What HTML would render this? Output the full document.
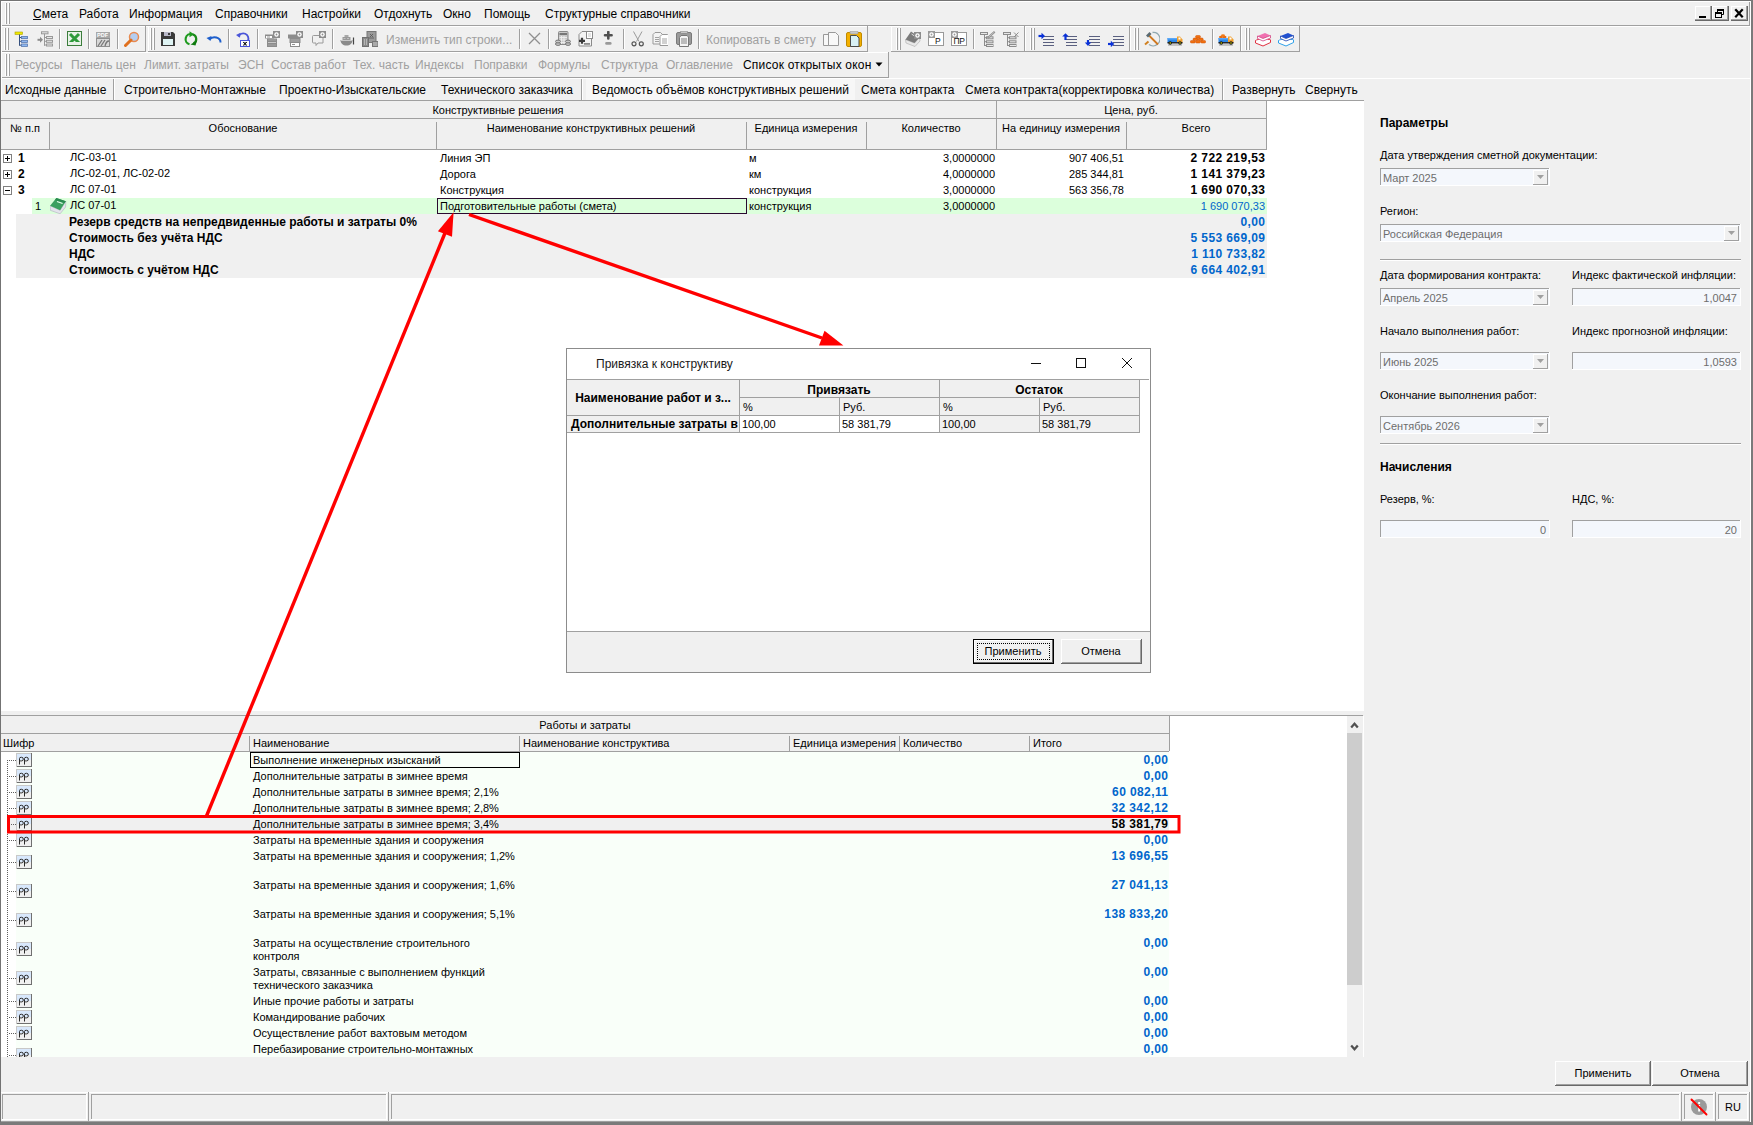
<!DOCTYPE html><html><head><meta charset="utf-8"><style>
html,body{margin:0;padding:0;}
body{width:1753px;height:1125px;position:relative;overflow:hidden;background:#f0f0f0;font-family:"Liberation Sans",sans-serif;color:#000;}
.t{position:absolute;white-space:pre;}
.r{position:absolute;}
</style></head><body>
<div class="r" style="left:5px;top:3px;width:1px;height:21px;background:#fff;"></div>
<div class="r" style="left:6px;top:3px;width:1px;height:21px;background:#a0a0a0;"></div>
<div class="r" style="left:8px;top:3px;width:1px;height:21px;background:#fff;"></div>
<div class="r" style="left:9px;top:3px;width:1px;height:21px;background:#a0a0a0;"></div>
<div class="t " style="left:33px;top:7px;font-size:12px;line-height:14px;">Смета</div>
<div class="t " style="left:79px;top:7px;font-size:12px;line-height:14px;">Работа</div>
<div class="t " style="left:129px;top:7px;font-size:12px;line-height:14px;">Информация</div>
<div class="t " style="left:215px;top:7px;font-size:12px;line-height:14px;">Справочники</div>
<div class="t " style="left:302px;top:7px;font-size:12px;line-height:14px;">Настройки</div>
<div class="t " style="left:374px;top:7px;font-size:12px;line-height:14px;">Отдохнуть</div>
<div class="t " style="left:443px;top:7px;font-size:12px;line-height:14px;">Окно</div>
<div class="t " style="left:484px;top:7px;font-size:12px;line-height:14px;">Помощь</div>
<div class="t " style="left:545px;top:7px;font-size:12px;line-height:14px;">Структурные справочники</div>
<div class="r" style="left:33px;top:19px;width:8px;height:1px;background:#000;"></div>
<div class="r" style="left:1px;top:25px;width:1749px;height:1px;background:#a0a0a0;"></div>
<div class="r" style="left:1px;top:26px;width:1749px;height:1px;background:#fff;"></div>
<div class="r" style="left:1695px;top:6px;width:17px;height:15px;background:#f0f0f0;box-shadow: inset -1px -1px 0 #696969, inset -2px -2px 0 #a0a0a0, inset 1px 1px 0 #fff;"></div>
<div class="r" style="left:1712px;top:6px;width:17px;height:15px;background:#f0f0f0;box-shadow: inset -1px -1px 0 #696969, inset -2px -2px 0 #a0a0a0, inset 1px 1px 0 #fff;"></div>
<div class="r" style="left:1731px;top:6px;width:17px;height:15px;background:#f0f0f0;box-shadow: inset -1px -1px 0 #696969, inset -2px -2px 0 #a0a0a0, inset 1px 1px 0 #fff;"></div>
<svg class="r" style="left:1695px;top:6px;" width="17" height="15" viewBox="0 0 17 15"><rect x="4" y="10" width="7" height="2" fill="#000"/></svg>
<svg class="r" style="left:1712px;top:6px;" width="17" height="15" viewBox="0 0 17 15"><path d="M5.5 6V3.5h6v5h-1.5" stroke="#000" fill="none" stroke-width="1"/><rect x="5" y="3" width="7" height="2" fill="#000"/><rect x="3.5" y="6.5" width="6" height="5" fill="none" stroke="#000" stroke-width="1"/><rect x="3" y="6" width="7" height="2" fill="#000"/></svg>
<svg class="r" style="left:1731px;top:6px;" width="17" height="15" viewBox="0 0 17 15"><path d="M5 4l6 6.5M11 4l-6 6.5" stroke="#000" stroke-width="2.2" stroke-linecap="square"/></svg>
<div class="r" style="left:1749px;top:1px;width:1px;height:25px;background:#a0a0a0;"></div>
<div class="r" style="left:1px;top:26px;width:1px;height:25px;background:#fff;"></div>
<div class="r" style="left:145px;top:26px;width:1px;height:26px;background:#a0a0a0;"></div>
<div class="r" style="left:1px;top:51px;width:145px;height:1px;background:#a0a0a0;"></div>
<div class="r" style="left:148px;top:26px;width:1px;height:25px;background:#fff;"></div>
<div class="r" style="left:867px;top:26px;width:1px;height:26px;background:#a0a0a0;"></div>
<div class="r" style="left:148px;top:51px;width:720px;height:1px;background:#a0a0a0;"></div>
<div class="r" style="left:891px;top:26px;width:1px;height:25px;background:#fff;"></div>
<div class="r" style="left:1024px;top:26px;width:1px;height:26px;background:#a0a0a0;"></div>
<div class="r" style="left:891px;top:51px;width:134px;height:1px;background:#a0a0a0;"></div>
<div class="r" style="left:1025px;top:26px;width:1px;height:25px;background:#fff;"></div>
<div class="r" style="left:1129px;top:26px;width:1px;height:26px;background:#a0a0a0;"></div>
<div class="r" style="left:1025px;top:51px;width:105px;height:1px;background:#a0a0a0;"></div>
<div class="r" style="left:1130px;top:26px;width:1px;height:25px;background:#fff;"></div>
<div class="r" style="left:1240px;top:26px;width:1px;height:26px;background:#a0a0a0;"></div>
<div class="r" style="left:1130px;top:51px;width:111px;height:1px;background:#a0a0a0;"></div>
<div class="r" style="left:1241px;top:26px;width:1px;height:25px;background:#fff;"></div>
<div class="r" style="left:1299px;top:26px;width:1px;height:26px;background:#a0a0a0;"></div>
<div class="r" style="left:1241px;top:51px;width:59px;height:1px;background:#a0a0a0;"></div>
<div class="r" style="left:4px;top:28px;width:1px;height:22px;background:#fff;"></div>
<div class="r" style="left:5px;top:28px;width:1px;height:22px;background:#a0a0a0;"></div>
<div class="r" style="left:7px;top:28px;width:1px;height:22px;background:#fff;"></div>
<div class="r" style="left:8px;top:28px;width:1px;height:22px;background:#a0a0a0;"></div>
<div class="r" style="left:150px;top:28px;width:1px;height:22px;background:#fff;"></div>
<div class="r" style="left:151px;top:28px;width:1px;height:22px;background:#a0a0a0;"></div>
<div class="r" style="left:153px;top:28px;width:1px;height:22px;background:#fff;"></div>
<div class="r" style="left:154px;top:28px;width:1px;height:22px;background:#a0a0a0;"></div>
<div class="r" style="left:896px;top:28px;width:1px;height:22px;background:#fff;"></div>
<div class="r" style="left:897px;top:28px;width:1px;height:22px;background:#a0a0a0;"></div>
<div class="r" style="left:899px;top:28px;width:1px;height:22px;background:#fff;"></div>
<div class="r" style="left:900px;top:28px;width:1px;height:22px;background:#a0a0a0;"></div>
<div class="r" style="left:1030px;top:28px;width:1px;height:22px;background:#fff;"></div>
<div class="r" style="left:1031px;top:28px;width:1px;height:22px;background:#a0a0a0;"></div>
<div class="r" style="left:1033px;top:28px;width:1px;height:22px;background:#fff;"></div>
<div class="r" style="left:1034px;top:28px;width:1px;height:22px;background:#a0a0a0;"></div>
<div class="r" style="left:1134px;top:28px;width:1px;height:22px;background:#fff;"></div>
<div class="r" style="left:1135px;top:28px;width:1px;height:22px;background:#a0a0a0;"></div>
<div class="r" style="left:1137px;top:28px;width:1px;height:22px;background:#fff;"></div>
<div class="r" style="left:1138px;top:28px;width:1px;height:22px;background:#a0a0a0;"></div>
<div class="r" style="left:1245px;top:28px;width:1px;height:22px;background:#fff;"></div>
<div class="r" style="left:1246px;top:28px;width:1px;height:22px;background:#a0a0a0;"></div>
<div class="r" style="left:1248px;top:28px;width:1px;height:22px;background:#fff;"></div>
<div class="r" style="left:1249px;top:28px;width:1px;height:22px;background:#a0a0a0;"></div>
<div class="r" style="left:59px;top:29px;width:1px;height:20px;background:#a0a0a0;"></div>
<div class="r" style="left:60px;top:29px;width:1px;height:20px;background:#fff;"></div>
<div class="r" style="left:88px;top:29px;width:1px;height:20px;background:#a0a0a0;"></div>
<div class="r" style="left:89px;top:29px;width:1px;height:20px;background:#fff;"></div>
<div class="r" style="left:117px;top:29px;width:1px;height:20px;background:#a0a0a0;"></div>
<div class="r" style="left:118px;top:29px;width:1px;height:20px;background:#fff;"></div>
<div class="r" style="left:228px;top:29px;width:1px;height:20px;background:#a0a0a0;"></div>
<div class="r" style="left:229px;top:29px;width:1px;height:20px;background:#fff;"></div>
<div class="r" style="left:257px;top:29px;width:1px;height:20px;background:#a0a0a0;"></div>
<div class="r" style="left:258px;top:29px;width:1px;height:20px;background:#fff;"></div>
<div class="r" style="left:332px;top:29px;width:1px;height:20px;background:#a0a0a0;"></div>
<div class="r" style="left:333px;top:29px;width:1px;height:20px;background:#fff;"></div>
<div class="r" style="left:519px;top:29px;width:1px;height:20px;background:#a0a0a0;"></div>
<div class="r" style="left:520px;top:29px;width:1px;height:20px;background:#fff;"></div>
<div class="r" style="left:548px;top:29px;width:1px;height:20px;background:#a0a0a0;"></div>
<div class="r" style="left:549px;top:29px;width:1px;height:20px;background:#fff;"></div>
<div class="r" style="left:623px;top:29px;width:1px;height:20px;background:#a0a0a0;"></div>
<div class="r" style="left:624px;top:29px;width:1px;height:20px;background:#fff;"></div>
<div class="r" style="left:698px;top:29px;width:1px;height:20px;background:#a0a0a0;"></div>
<div class="r" style="left:699px;top:29px;width:1px;height:20px;background:#fff;"></div>
<div class="r" style="left:973px;top:29px;width:1px;height:20px;background:#a0a0a0;"></div>
<div class="r" style="left:974px;top:29px;width:1px;height:20px;background:#fff;"></div>
<div class="r" style="left:1212px;top:29px;width:1px;height:20px;background:#a0a0a0;"></div>
<div class="r" style="left:1213px;top:29px;width:1px;height:20px;background:#fff;"></div>
<svg class="r" style="left:14px;top:31px;" width="16" height="16" viewBox="0 0 16 16"><rect x="1" y="1" width="7.5" height="2.5" fill="#f0e800" stroke="#a8a000" stroke-width="0.6"/><path d="M5.5 3.5v11.2M5.5 6.5h2M5.5 10.3h2M5.5 14.2h2" stroke="#35507f" stroke-width="1"/><rect x="7.5" y="5.4" width="6" height="2.2" fill="#90b8f0" stroke="#5878b0" stroke-width="0.8"/><rect x="7.5" y="9.3" width="6" height="2.2" fill="#90b8f0" stroke="#5878b0" stroke-width="0.8"/><rect x="7.5" y="13" width="6" height="2.4" fill="#90b8f0" stroke="#5878b0" stroke-width="0.8"/></svg>
<svg class="r" style="left:37px;top:31px;" width="16" height="16" viewBox="0 0 16 16"><path d="M0.5 8.8h3" stroke="#8c8c8c" stroke-width="2"/><polygon points="3,5.8 6,8.8 3,11.8" fill="#8c8c8c"/><rect x="4.5" y="0.8" width="6.5" height="2" fill="#e8e8e8" stroke="#999" stroke-width="1"/><path d="M7.5 2.8v12M7.5 6.5h2M7.5 10.3h2M7.5 14h2" stroke="#999" stroke-width="1"/><rect x="9.5" y="5.5" width="6" height="2" fill="#e8e8e8" stroke="#999" stroke-width="1"/><rect x="9.5" y="9.3" width="6" height="2" fill="#e8e8e8" stroke="#999" stroke-width="1"/><rect x="9.5" y="13" width="6" height="2" fill="#e8e8e8" stroke="#999" stroke-width="1"/></svg>
<svg class="r" style="left:67px;top:31px;" width="16" height="16" viewBox="0 0 16 16"><rect x="0.5" y="0.5" width="14" height="14" fill="#e8f2e8" stroke="#3b7d3b" stroke-width="1"/><path d="M3 3l9 9M12 3l-9 9" stroke="#2e9a3a" stroke-width="3"/><rect x="2" y="11" width="11" height="2" fill="#e8f2e8"/></svg>
<svg class="r" style="left:95px;top:31px;" width="16" height="16" viewBox="0 0 16 16"><path d="M1 1h11l3 3v12H1z" fill="#8f8f8f"/><rect x="1" y="1" width="14" height="6" fill="#a8a8a8"/><text x="2" y="6.3" font-size="5.5" font-weight="bold" fill="#fff" font-family="Liberation Sans">PDF</text><rect x="2" y="8" width="12" height="7" fill="#d8d8d8"/><path d="M3 15l4-6M6 15l4-6M10 15c1-4 3-5 4-5" stroke="#777" stroke-width="1.3" fill="none"/></svg>
<svg class="r" style="left:124px;top:31px;" width="16" height="16" viewBox="0 0 16 16"><circle cx="10" cy="6" r="4.5" fill="#b4cdf0" stroke="#e88a50" stroke-width="1.5"/><path d="M7 9l-5.5 5.5" stroke="#e0701e" stroke-width="3" stroke-linecap="round"/></svg>
<svg class="r" style="left:160px;top:31px;" width="16" height="16" viewBox="0 0 16 16"><path d="M1 1h12l2 2v12H1z" fill="#3a3a3a"/><rect x="4" y="1" width="7" height="4" fill="#b8b8c8"/><rect x="8" y="2" width="2" height="2" fill="#3a3a3a"/><rect x="3" y="8" width="10" height="6" fill="#dff4f4"/></svg>
<svg class="r" style="left:183px;top:31px;" width="16" height="16" viewBox="0 0 16 16"><path d="M9 3.2A5 5 0 0 0 6.5 13.2" stroke="#1e9a1e" stroke-width="2.2" fill="none"/><polygon points="6.5,0.3 11,3.2 6.5,6.2" fill="#1e9a1e"/><path d="M9.5 3.2A5 5 0 0 1 10.5 12.5" stroke="#1a8a1a" stroke-width="2.2" fill="none"/><polygon points="14,9.5 12.5,14.5 7.5,13.5" fill="#0f7a0f"/></svg>
<svg class="r" style="left:206px;top:31px;" width="16" height="16" viewBox="0 0 16 16"><path d="M3.5 8.5a6 5 0 0 1 11 3" stroke="#1e5fcc" stroke-width="2" fill="none"/><path d="M0.5 7l5-2-1 5z" fill="#1e5fcc"/></svg>
<svg class="r" style="left:235px;top:31px;" width="16" height="16" viewBox="0 0 16 16"><path d="M3.5 5.5a5 5 0 0 1 9.5 4" stroke="#4a55d8" stroke-width="1.8" fill="none"/><path d="M1 4l4.5-2.2-0.5 5z" fill="#4a55d8"/><rect x="5.5" y="9.5" width="9" height="6" fill="#fff" stroke="#4a55d8"/><path d="M8 11l4 3.5M12 11l-4 3.5M10 11v3.5" stroke="#000" stroke-width="0.9"/></svg>
<svg class="r" style="left:264px;top:31px;" width="16" height="16" viewBox="0 0 16 16"><rect x="1" y="3.5" width="9" height="4" fill="#8c8c8c"/><rect x="2" y="5" width="6" height="2" fill="#fff"/><path d="M3 6h3" stroke="#777" stroke-width="0.8"/><rect x="3" y="7.5" width="10" height="8.5" fill="#8c8c8c"/><path d="M4 11.5h8" stroke="#c8c8c8" stroke-width="1"/><path d="M4 9h8M4 14h8" stroke="#a8a8a8" stroke-width="1"/><rect x="9" y="0" width="7" height="7" fill="#8c8c8c"/><circle cx="12.5" cy="3.5" r="2.2" fill="#fff"/><circle cx="12.5" cy="3.5" r="0.9" fill="#8c8c8c"/></svg>
<svg class="r" style="left:287px;top:31px;" width="16" height="16" viewBox="0 0 16 16"><rect x="1" y="3.5" width="12" height="4" fill="#8c8c8c"/><rect x="3" y="7.5" width="10" height="4" fill="#a0a0a0" stroke="#8c8c8c" stroke-width="1"/><rect x="3.5" y="11.5" width="9" height="4" fill="#fff" stroke="#8c8c8c" stroke-width="1"/><path d="M5 13.5h3" stroke="#777" stroke-width="0.8"/><rect x="9" y="0" width="7" height="7" fill="#8c8c8c"/><circle cx="12.5" cy="3.5" r="2.2" fill="#fff"/><circle cx="12.5" cy="3.5" r="0.9" fill="#8c8c8c"/></svg>
<svg class="r" style="left:310px;top:31px;" width="16" height="16" viewBox="0 0 16 16"><path d="M3.5 4.5h9.5v7.5h-5l-2 2.5v-2.5h-2.5a1 1 0 0 1-1-1v-5.5a1 1 0 0 1 1-1z" fill="none" stroke="#9a9a9a" stroke-width="1"/><rect x="9" y="0" width="7" height="7" fill="#8c8c8c"/><circle cx="12.5" cy="3.5" r="2.2" fill="#fff"/><circle cx="12.5" cy="3.5" r="0.9" fill="#8c8c8c"/></svg>
<svg class="r" style="left:339px;top:31px;" width="16" height="16" viewBox="0 0 16 16"><path d="M1.5 9h12c0 3.5-2.5 5.5-6 5.5S1.5 12.5 1.5 9z" fill="#8a8a8a"/><path d="M2 9.5h11" stroke="#c8c8c8" stroke-width="1"/><rect x="3.5" y="6" width="8" height="3" fill="#999"/><rect x="5.5" y="4" width="4" height="2" fill="#a8a8a8"/><path d="M14.5 6.5v7" stroke="#444" stroke-width="1.2"/><path d="M4.5 7.5h2M8 7.5h2" stroke="#ccc" stroke-width="0.8"/></svg>
<svg class="r" style="left:362px;top:31px;" width="16" height="16" viewBox="0 0 16 16"><rect x="5" y="0.5" width="9" height="11" fill="#9a9a9a" stroke="#777" stroke-width="1"/><rect x="0.5" y="6.5" width="6" height="9" fill="#8a8a8a" stroke="#707070" stroke-width="1"/><rect x="10.5" y="10.5" width="5.5" height="5" fill="#aaa" stroke="#777" stroke-width="1"/><path d="M2.5 8v6M4.5 8v6" stroke="#c0c0c0" stroke-width="0.8"/><path d="M8 3l3 3M11 3l-3 3M7 7h5" stroke="#555" stroke-width="0.8"/></svg>
<svg class="r" style="left:527px;top:31px;" width="16" height="16" viewBox="0 0 16 16"><path d="M2 2l11 11M13 2L2 13" stroke="#8f8f8f" stroke-width="1.3"/></svg>
<svg class="r" style="left:555px;top:31px;" width="16" height="16" viewBox="0 0 16 16"><rect x="3.5" y="0.5" width="9.5" height="13" rx="1" fill="#c8c8c8" stroke="#8a8a8a" stroke-width="1"/><rect x="4.5" y="2" width="7.5" height="2" fill="#777"/><path d="M4.5 6.5h7.5M4.5 9h7.5M4.5 11.5h7.5M6.5 5v8M9 5v8" stroke="#eee" stroke-width="0.9"/><g fill="#c8c8c8" stroke="#777" stroke-width="1"><ellipse cx="3" cy="13" rx="2.6" ry="1.4"/><ellipse cx="3" cy="10.5" rx="2.6" ry="1.4"/><ellipse cx="13" cy="13" rx="2.6" ry="1.4"/><ellipse cx="13" cy="10.5" rx="2.6" ry="1.4"/></g></svg>
<svg class="r" style="left:578px;top:31px;" width="16" height="16" viewBox="0 0 16 16"><path d="M4 0.5h9.5v14.5h-12.5v-11.5z" fill="#f4f4f4" stroke="#8a8a8a" stroke-width="1"/><rect x="8.5" y="0.5" width="6" height="7" fill="#fff" stroke="#8a8a8a" stroke-width="1"/><path d="M10 3h3M10 5h3" stroke="#bbb" stroke-width="0.8"/><path d="M1 9.8h6M4 6.8v6" stroke="#3a3a3a" stroke-width="2.2"/><rect x="6" y="12" width="6" height="1.8" fill="#8a8a8a"/></svg>
<svg class="r" style="left:601px;top:31px;" width="16" height="16" viewBox="0 0 16 16"><path d="M7.3 1v6.5M4 4.2h6.6" stroke="#505050" stroke-width="2.6" stroke-linecap="round"/><rect x="4.2" y="11" width="6.4" height="2.7" rx="1.3" fill="#999"/></svg>
<svg class="r" style="left:630px;top:31px;" width="16" height="16" viewBox="0 0 16 16"><path d="M3.5 0.5L9 10.5M12 0.5L6.5 10.5" stroke="#9a9a9a" stroke-width="1"/><circle cx="4" cy="12.8" r="2" fill="none" stroke="#555" stroke-width="1.2"/><circle cx="11.3" cy="12.8" r="2" fill="none" stroke="#555" stroke-width="1.2"/></svg>
<svg class="r" style="left:652px;top:31px;" width="16" height="16" viewBox="0 0 16 16"><path d="M3 1.5h5.5l2 2v9.5h-9.5v-9.5z" fill="#f4f4f4" stroke="#999" stroke-width="1"/><path d="M10 3.5h5.5l1 1v10h-8.5v-9z" fill="#fff" stroke="#999" stroke-width="1"/><path d="M3 6.5h4M3 8.5h4M3 10.5h4M10 8h5M10 10h5M10 12h5" stroke="#999" stroke-width="0.9"/></svg>
<svg class="r" style="left:676px;top:31px;" width="16" height="16" viewBox="0 0 16 16"><rect x="0.5" y="1.5" width="15" height="12" rx="1.5" fill="#9a9a9a" stroke="#7a7a7a" stroke-width="1"/><rect x="4.5" y="0" width="7" height="2.5" rx="1" fill="#c8c8c8" stroke="#888" stroke-width="0.8"/><path d="M5 4.5h6l1.5 1.5v9.5h-9v-9z" fill="#f4f4f4" stroke="#777" stroke-width="1"/><path d="M5 8h6M5 10h6M5 12h6" stroke="#777" stroke-width="0.9"/></svg>
<svg class="r" style="left:823px;top:31px;" width="16" height="16" viewBox="0 0 16 16"><path d="M0.5 3.5h7v11h-7z" fill="#f8f8f8" stroke="#999" stroke-width="1"/><path d="M5.5 1.5h7l3 3v10h-10z" fill="#f8f8f8" stroke="#999" stroke-width="1"/></svg>
<svg class="r" style="left:846px;top:31px;" width="16" height="16" viewBox="0 0 16 16"><rect x="0.5" y="1.5" width="15" height="14" rx="1.5" fill="#f4b000" stroke="#c08a00" stroke-width="1"/><rect x="4" y="0" width="8" height="3" rx="1" fill="#c8c8c8" stroke="#999" stroke-width="0.6"/><path d="M4.5 4.5h6l2.5 2.5v8.5h-8.5z" fill="#d8f0f4" stroke="#4a4a4a" stroke-width="1"/></svg>
<svg class="r" style="left:905px;top:31px;" width="16" height="16" viewBox="0 0 16 16"><polygon points="0.5,8.5 1,12 10,15.5 15,10 14.5,6.5 9.5,12" fill="#e8e8e8" stroke="#aaa" stroke-width="0.6"/><polygon points="6,0.5 14.5,6.5 9.5,12 0.5,8.5" fill="#7a7a7a"/><path d="M6.5 3l3 2" stroke="#ddd" stroke-width="1"/><rect x="9" y="1" width="7" height="7" fill="#8c8c8c"/><circle cx="12.5" cy="4.5" r="2.2" fill="#fff"/><circle cx="12.5" cy="4.5" r="0.9" fill="#8c8c8c"/></svg>
<svg class="r" style="left:928px;top:31px;" width="16" height="16" viewBox="0 0 16 16"><rect x="0.5" y="1.5" width="15" height="13" fill="#fff" stroke="#999" stroke-width="1"/><rect x="0" y="0" width="7" height="7" fill="#9a9a9a"/><circle cx="3.5" cy="3.5" r="2.2" fill="#fff"/><circle cx="3.5" cy="3.5" r="0.9" fill="#9a9a9a"/><text x="7" y="13" font-size="8.5" font-family="Liberation Sans" fill="#111">P</text></svg>
<svg class="r" style="left:951px;top:31px;" width="16" height="16" viewBox="0 0 16 16"><rect x="0.5" y="1.5" width="15" height="13" fill="#fff" stroke="#999" stroke-width="1"/><rect x="0" y="0" width="7" height="7" fill="#9a9a9a"/><circle cx="3.5" cy="3.5" r="2.2" fill="#fff"/><circle cx="3.5" cy="3.5" r="0.9" fill="#9a9a9a"/><text x="2.5" y="13" font-size="8.5" font-family="Liberation Sans" fill="#111" letter-spacing="-0.3">ПР</text></svg>
<svg class="r" style="left:980px;top:31px;" width="16" height="16" viewBox="0 0 16 16"><rect x="0.5" y="1.5" width="7" height="2" fill="#e8e8e8" stroke="#8c8c8c" stroke-width="1"/><path d="M4.5 3.5v11.5M4.5 6.7h2M4.5 10.7h2M4.5 14.5h2" stroke="#8c8c8c" stroke-width="1"/><rect x="6.5" y="5.8" width="6.5" height="2" fill="#e8e8e8" stroke="#8c8c8c" stroke-width="1"/><rect x="6.5" y="9.8" width="6.5" height="2" fill="#e8e8e8" stroke="#8c8c8c" stroke-width="1"/><rect x="6.5" y="13.5" width="6.5" height="2" fill="#e8e8e8" stroke="#8c8c8c" stroke-width="1"/><path d="M7.7 7l7-6.3" stroke="#8c8c8c" stroke-width="2"/><path d="M8.5 6.2l6-5.3" stroke="#e0e0e0" stroke-width="0.6"/></svg>
<svg class="r" style="left:1003px;top:31px;" width="16" height="16" viewBox="0 0 16 16"><rect x="0.5" y="1.5" width="7" height="2" fill="#e8e8e8" stroke="#8c8c8c" stroke-width="1"/><path d="M4.5 3.5v11.5M4.5 6.7h2M4.5 10.7h2M4.5 14.5h2" stroke="#8c8c8c" stroke-width="1"/><rect x="6.5" y="5.8" width="6.5" height="2" fill="#e8e8e8" stroke="#8c8c8c" stroke-width="1"/><rect x="6.5" y="9.8" width="6.5" height="2" fill="#e8e8e8" stroke="#8c8c8c" stroke-width="1"/><rect x="6.5" y="13.5" width="6.5" height="2" fill="#e8e8e8" stroke="#8c8c8c" stroke-width="1"/><path d="M11 1.5l4.5 4.5M15.5 1.5L11 6" stroke="#8c8c8c" stroke-width="1"/></svg>
<svg class="r" style="left:1038px;top:31px;" width="16" height="16" viewBox="0 0 16 16"><path d="M5 5.5h12M5 8.5h12M5 11.5h12M5 14.5h12" stroke="#5a6080" stroke-width="1.1"/><path d="M0.5 5h3.5" stroke="#0a32d8" stroke-width="2.2"/><polygon points="3.5,1.8 7,5 3.5,8.2" fill="#0a32d8"/></svg>
<svg class="r" style="left:1061px;top:31px;" width="16" height="16" viewBox="0 0 16 16"><path d="M5 5.5h12M5 8.5h12M5 11.5h12M5 14.5h12" stroke="#5a6080" stroke-width="1.1"/><path d="M4.5 9V5" stroke="#0a32d8" stroke-width="2.2"/><polygon points="1.2,5.5 4.5,2.2 7.8,5.5" fill="#0a32d8"/></svg>
<svg class="r" style="left:1084px;top:31px;" width="16" height="16" viewBox="0 0 16 16"><path d="M5 5.5h12M5 8.5h12M5 11.5h12M5 14.5h12" stroke="#5a6080" stroke-width="1.1"/><path d="M4 9v3" stroke="#0a32d8" stroke-width="2.2"/><polygon points="0.8,11.5 4,15 7.2,11.5" fill="#0a32d8"/></svg>
<svg class="r" style="left:1108px;top:31px;" width="16" height="16" viewBox="0 0 16 16"><path d="M5 5.5h12M5 8.5h12M5 11.5h12M5 14.5h12" stroke="#5a6080" stroke-width="1.1"/><path d="M0 13h3" stroke="#0a32d8" stroke-width="2.2"/><polygon points="2.8,9.8 6.3,13 2.8,16.2" fill="#0a32d8"/></svg>
<svg class="r" style="left:1144px;top:31px;" width="16" height="16" viewBox="0 0 16 16"><path d="M8.5 1.5A6.5 6.5 0 0 1 13.5 13 6.5 6.5 0 0 1 5 13.5" stroke="#90a8b0" stroke-width="1.3" fill="none"/><path d="M1 13.5l3.5-3" stroke="#d08020" stroke-width="2"/><path d="M4.5 4l9.5 9.5" stroke="#d07820" stroke-width="1.8"/><path d="M2 4.5l3.5-3.5 2 2-3.5 3.5z" fill="#5a6a72"/></svg>
<svg class="r" style="left:1167px;top:31px;" width="16" height="16" viewBox="0 0 16 16"><rect x="1" y="13.5" width="14" height="1" fill="#9a9a9a"/><rect x="0.5" y="7" width="9.5" height="5" fill="#2b86e8"/><rect x="0.5" y="7" width="9.5" height="1.5" fill="#5aa8f8"/><path d="M10 5.5h3l2.5 3v3.5h-5.5z" fill="#f0a030"/><rect x="11.5" y="6.5" width="2" height="2" fill="#fff"/><rect x="0.5" y="11" width="15" height="1.5" fill="#2a2a2a"/><circle cx="3.2" cy="12" r="1.7" fill="#111"/><circle cx="3.2" cy="12" r="0.7" fill="#ff0"/><circle cx="13" cy="12" r="1.7" fill="#111"/><circle cx="13" cy="12" r="0.7" fill="#ff0"/></svg>
<svg class="r" style="left:1190px;top:31px;" width="16" height="16" viewBox="0 0 16 16"><g fill="#f07010" stroke="#d05000" stroke-width="0.5"><rect x="0.3" y="9.5" width="5" height="2.5" rx="1.2"/><rect x="5.5" y="9.5" width="5" height="2.5" rx="1.2"/><rect x="10.7" y="9.5" width="5" height="2.5" rx="1.2"/><rect x="3" y="7" width="5" height="2.5" rx="1.2"/><rect x="8.2" y="7" width="5" height="2.5" rx="1.2"/><rect x="5.5" y="4.5" width="5" height="2.5" rx="1.2"/></g></svg>
<svg class="r" style="left:1218px;top:31px;" width="16" height="16" viewBox="0 0 16 16"><ellipse cx="3" cy="6" rx="2" ry="1.2" fill="#e86a10"/><ellipse cx="6.5" cy="6" rx="2" ry="1.2" fill="#e86a10"/><ellipse cx="5" cy="4.5" rx="2" ry="1.2" fill="#f07a18"/><rect x="1" y="13.5" width="14" height="1" fill="#9a9a9a"/><rect x="0.5" y="7" width="9.5" height="5" fill="#2b86e8"/><rect x="0.5" y="7" width="9.5" height="1.5" fill="#5aa8f8"/><path d="M10 5.5h3l2.5 3v3.5h-5.5z" fill="#f0a030"/><rect x="11.5" y="6.5" width="2" height="2" fill="#fff"/><rect x="0.5" y="11" width="15" height="1.5" fill="#2a2a2a"/><circle cx="3.2" cy="12" r="1.7" fill="#111"/><circle cx="3.2" cy="12" r="0.7" fill="#ff0"/><circle cx="13" cy="12" r="1.7" fill="#111"/><circle cx="13" cy="12" r="0.7" fill="#ff0"/></svg>
<svg class="r" style="left:1255px;top:31px;" width="16" height="16" viewBox="0 0 16 16"><polygon points="0.5,9.5 8,6.5 15.5,9 8,12.5" fill="#fff" stroke="#e03040" stroke-width="1"/><path d="M0.5 9.5v2.5l7.5 3 7.5-3.5v-2.5" fill="#fff" stroke="#e03040" stroke-width="1"/><polygon points="2.5,5 10,2 15.5,4.5 8,7.5" fill="#f070b0"/><path d="M2.5 5v2.5l5.5 2.5 7.5-3v-2.5l-7.5 3z" fill="#fff" stroke="#d04080" stroke-width="0.8"/></svg>
<svg class="r" style="left:1278px;top:31px;" width="16" height="16" viewBox="0 0 16 16"><polygon points="0.5,9.5 8,6.5 15.5,9 8,12.5" fill="#fff" stroke="#30a0e8" stroke-width="1"/><path d="M0.5 9.5v2.5l7.5 3 7.5-3.5v-2.5" fill="#fff" stroke="#30a0e8" stroke-width="1"/><polygon points="2.5,5 10,2 15.5,4.5 8,7.5" fill="#2050d0"/><path d="M2.5 5v2.5l5.5 2.5 7.5-3v-2.5l-7.5 3z" fill="#fff" stroke="#1840b0" stroke-width="0.8"/></svg>
<div class="t " style="left:386px;top:33px;font-size:12px;line-height:14px;color:#a0a0a0;">Изменить тип строки...</div>
<div class="t " style="left:706px;top:33px;font-size:12px;line-height:14px;color:#a0a0a0;">Копировать в смету</div>
<div class="r" style="left:1px;top:52px;width:1px;height:25px;background:#fff;"></div>
<div class="r" style="left:1px;top:52px;width:887px;height:1px;background:#fff;"></div>
<div class="r" style="left:888px;top:52px;width:1px;height:26px;background:#a0a0a0;"></div>
<div class="r" style="left:1px;top:77px;width:888px;height:1px;background:#a0a0a0;"></div>
<div class="r" style="left:1px;top:78px;width:1749px;height:1px;background:#fff;"></div>
<div class="r" style="left:5px;top:54px;width:1px;height:22px;background:#fff;"></div>
<div class="r" style="left:6px;top:54px;width:1px;height:22px;background:#a0a0a0;"></div>
<div class="r" style="left:8px;top:54px;width:1px;height:22px;background:#fff;"></div>
<div class="r" style="left:9px;top:54px;width:1px;height:22px;background:#a0a0a0;"></div>
<div class="t " style="left:15px;top:58px;font-size:12px;line-height:14px;color:#a0a0a0;">Ресурсы</div>
<div class="t " style="left:71px;top:58px;font-size:12px;line-height:14px;color:#a0a0a0;">Панель цен</div>
<div class="t " style="left:144px;top:58px;font-size:12px;line-height:14px;color:#a0a0a0;">Лимит. затраты</div>
<div class="t " style="left:238px;top:58px;font-size:12px;line-height:14px;color:#a0a0a0;">ЭСН</div>
<div class="t " style="left:271px;top:58px;font-size:12px;line-height:14px;color:#a0a0a0;">Состав работ</div>
<div class="t " style="left:353px;top:58px;font-size:12px;line-height:14px;color:#a0a0a0;">Тех. часть</div>
<div class="t " style="left:415px;top:58px;font-size:12px;line-height:14px;color:#a0a0a0;">Индексы</div>
<div class="t " style="left:474px;top:58px;font-size:12px;line-height:14px;color:#a0a0a0;">Поправки</div>
<div class="t " style="left:538px;top:58px;font-size:12px;line-height:14px;color:#a0a0a0;">Формулы</div>
<div class="t " style="left:601px;top:58px;font-size:12px;line-height:14px;color:#a0a0a0;">Структура</div>
<div class="t " style="left:666px;top:58px;font-size:12px;line-height:14px;color:#a0a0a0;">Оглавление</div>
<div class="t " style="left:743px;top:58px;font-size:12px;line-height:14px;letter-spacing:0.2px;">Список открытых окон</div>
<svg class="r" style="left:875px;top:62px;" width="8" height="5" viewBox="0 0 8 5"><path d="M0.5 0.5h7l-3.5 4z" fill="#000"/></svg>
<div class="r" style="left:586px;top:79px;width:269px;height:21px;background:#f7f7f7;"></div>
<div class="t " style="left:5px;top:83px;font-size:12px;line-height:14px;">Исходные данные</div>
<div class="t " style="left:124px;top:83px;font-size:12px;line-height:14px;">Строительно-Монтажные</div>
<div class="t " style="left:279px;top:83px;font-size:12px;line-height:14px;">Проектно-Изыскательские</div>
<div class="t " style="left:441px;top:83px;font-size:12px;line-height:14px;">Технического заказчика</div>
<div class="t " style="left:592px;top:83px;font-size:12px;line-height:14px;">Ведомость объёмов конструктивных решений</div>
<div class="t " style="left:861px;top:83px;font-size:12px;line-height:14px;">Смета контракта</div>
<div class="t " style="left:965px;top:83px;font-size:12px;line-height:14px;">Смета контракта(корректировка количества)</div>
<div class="t " style="left:1232px;top:83px;font-size:12px;line-height:14px;">Развернуть</div>
<div class="t " style="left:1305px;top:83px;font-size:12px;line-height:14px;">Свернуть</div>
<div class="r" style="left:113px;top:79px;width:1px;height:21px;background:#a0a0a0;"></div>
<div class="r" style="left:114px;top:79px;width:1px;height:21px;background:#fff;"></div>
<div class="r" style="left:581px;top:79px;width:1px;height:21px;background:#a0a0a0;"></div>
<div class="r" style="left:582px;top:79px;width:1px;height:21px;background:#fff;"></div>
<div class="r" style="left:1222px;top:79px;width:1px;height:21px;background:#a0a0a0;"></div>
<div class="r" style="left:1223px;top:79px;width:1px;height:21px;background:#fff;"></div>
<div class="r" style="left:1px;top:100px;width:1363px;height:1px;background:#a0a0a0;"></div>
<div class="r" style="left:1px;top:101px;width:1363px;height:610px;background:#fff;"></div>
<div class="r" style="left:1px;top:101px;width:1266px;height:48px;background:#f0f0f0;"></div>
<div class="r" style="left:1px;top:118px;width:1266px;height:1px;background:#a0a0a0;"></div>
<div class="r" style="left:1px;top:149px;width:1266px;height:1px;background:#a0a0a0;"></div>
<div class="r" style="left:996px;top:101px;width:1px;height:48px;background:#a0a0a0;"></div>
<div class="r" style="left:1266px;top:101px;width:1px;height:49px;background:#a0a0a0;"></div>
<div class="r" style="left:49px;top:122px;width:1px;height:27px;background:#a0a0a0;"></div>
<div class="r" style="left:436px;top:122px;width:1px;height:27px;background:#a0a0a0;"></div>
<div class="r" style="left:746px;top:122px;width:1px;height:27px;background:#a0a0a0;"></div>
<div class="r" style="left:866px;top:122px;width:1px;height:27px;background:#a0a0a0;"></div>
<div class="r" style="left:1126px;top:122px;width:1px;height:27px;background:#a0a0a0;"></div>
<div class="t " style="left:98px;width:800px;text-align:center;top:104px;font-size:11px;line-height:13px;">Конструктивные решения</div>
<div class="t " style="left:731px;width:800px;text-align:center;top:104px;font-size:11px;line-height:13px;">Цена, руб.</div>
<div class="t " style="left:-375px;width:800px;text-align:center;top:122px;font-size:11px;line-height:13px;">№ п.п</div>
<div class="t " style="left:-157px;width:800px;text-align:center;top:122px;font-size:11px;line-height:13px;">Обоснование</div>
<div class="t " style="left:191px;width:800px;text-align:center;top:122px;font-size:11px;line-height:13px;">Наименование конструктивных решений</div>
<div class="t " style="left:406px;width:800px;text-align:center;top:122px;font-size:11px;line-height:13px;">Единица измерения</div>
<div class="t " style="left:531px;width:800px;text-align:center;top:122px;font-size:11px;line-height:13px;">Количество</div>
<div class="t " style="left:661px;width:800px;text-align:center;top:122px;font-size:11px;line-height:13px;">На единицу измерения</div>
<div class="t " style="left:796px;width:800px;text-align:center;top:122px;font-size:11px;line-height:13px;">Всего</div>
<div class="r" style="left:3px;top:154px;width:9px;height:9px;background:#fff;border:1px solid #808080;box-sizing:border-box;"></div>
<div class="r" style="left:5px;top:158px;width:5px;height:1px;background:#000;"></div>
<div class="r" style="left:7px;top:156px;width:1px;height:5px;background:#000;"></div>
<div class="t " style="left:18px;top:151px;font-size:12px;line-height:14px;font-weight:bold;letter-spacing:0.4px;">1</div>
<div class="t " style="left:70px;top:151px;font-size:11px;line-height:13px;">ЛС-03-01</div>
<div class="t " style="left:440px;top:152px;font-size:11px;line-height:13px;">Линия ЭП</div>
<div class="t " style="left:749px;top:152px;font-size:11px;line-height:13px;">м</div>
<div class="t " style="left:395px;width:600px;text-align:right;top:152px;font-size:11px;line-height:13px;">3,0000000</div>
<div class="t " style="left:524px;width:600px;text-align:right;top:152px;font-size:11px;line-height:13px;">907 406,51</div>
<div class="t " style="left:665.4000000000001px;width:600px;text-align:right;top:151px;font-size:12px;line-height:14px;font-weight:bold;letter-spacing:0.4px;">2 722 219,53</div>
<div class="r" style="left:3px;top:170px;width:9px;height:9px;background:#fff;border:1px solid #808080;box-sizing:border-box;"></div>
<div class="r" style="left:5px;top:174px;width:5px;height:1px;background:#000;"></div>
<div class="r" style="left:7px;top:172px;width:1px;height:5px;background:#000;"></div>
<div class="t " style="left:18px;top:167px;font-size:12px;line-height:14px;font-weight:bold;letter-spacing:0.4px;">2</div>
<div class="t " style="left:70px;top:167px;font-size:11px;line-height:13px;">ЛС-02-01, ЛС-02-02</div>
<div class="t " style="left:440px;top:168px;font-size:11px;line-height:13px;">Дорога</div>
<div class="t " style="left:749px;top:168px;font-size:11px;line-height:13px;">км</div>
<div class="t " style="left:395px;width:600px;text-align:right;top:168px;font-size:11px;line-height:13px;">4,0000000</div>
<div class="t " style="left:524px;width:600px;text-align:right;top:168px;font-size:11px;line-height:13px;">285 344,81</div>
<div class="t " style="left:665.4000000000001px;width:600px;text-align:right;top:167px;font-size:12px;line-height:14px;font-weight:bold;letter-spacing:0.4px;">1 141 379,23</div>
<div class="r" style="left:3px;top:186px;width:9px;height:9px;background:#fff;border:1px solid #808080;box-sizing:border-box;"></div>
<div class="r" style="left:5px;top:190px;width:5px;height:1px;background:#000;"></div>
<div class="t " style="left:18px;top:183px;font-size:12px;line-height:14px;font-weight:bold;letter-spacing:0.4px;">3</div>
<div class="t " style="left:70px;top:183px;font-size:11px;line-height:13px;">ЛС 07-01</div>
<div class="t " style="left:440px;top:184px;font-size:11px;line-height:13px;">Конструкция</div>
<div class="t " style="left:749px;top:184px;font-size:11px;line-height:13px;">конструкция</div>
<div class="t " style="left:395px;width:600px;text-align:right;top:184px;font-size:11px;line-height:13px;">3,0000000</div>
<div class="t " style="left:524px;width:600px;text-align:right;top:184px;font-size:11px;line-height:13px;">563 356,78</div>
<div class="t " style="left:665.4000000000001px;width:600px;text-align:right;top:183px;font-size:12px;line-height:14px;font-weight:bold;letter-spacing:0.4px;">1 690 070,33</div>
<div class="r" style="left:32px;top:198px;width:1235px;height:16px;background:#dcffdc;"></div>
<div class="t " style="left:35px;top:200px;font-size:11px;line-height:13px;">1</div>
<svg class="r" style="left:50px;top:198px;" width="17" height="16" viewBox="0 0 17 16"><polygon points="0.1,7.8 0.3,12.3 10.1,15.8 15.6,9 15.8,3.3 10.1,12.3" fill="#e4e4ec" stroke="#b0b0c0" stroke-width="0.6"/><polygon points="6.4,0 15.8,3.3 10.1,12.3 0.1,7.8" fill="#3aa060"/><polygon points="6.4,0 15.8,3.3 14.5,5 5,2" fill="#2a8a50"/><path d="M7 3.5l5.6 2" stroke="#e8fff0" stroke-width="1.3"/></svg>
<div class="t " style="left:70px;top:199px;font-size:11px;line-height:13px;">ЛС 07-01</div>
<div class="r" style="left:437px;top:198px;width:310px;height:16px;border:1px solid #2a0a30;box-sizing:border-box;"></div>
<div class="t " style="left:440px;top:200px;font-size:11px;line-height:13px;">Подготовительные работы (смета)</div>
<div class="t " style="left:749px;top:200px;font-size:11px;line-height:13px;">конструкция</div>
<div class="t " style="left:395px;width:600px;text-align:right;top:200px;font-size:11px;line-height:13px;">3,0000000</div>
<div class="t " style="left:665px;width:600px;text-align:right;top:200px;font-size:11px;line-height:13px;color:#0066cc;">1 690 070,33</div>
<div class="r" style="left:16px;top:214px;width:1251px;height:64px;background:#f0f0f0;"></div>
<div class="t " style="left:69px;top:215px;font-size:12px;line-height:14px;font-weight:bold;">Резерв средств на непредвиденные работы и затраты 0%</div>
<div class="t " style="left:665.4000000000001px;width:600px;text-align:right;top:215px;font-size:12px;line-height:14px;font-weight:bold;letter-spacing:0.4px;color:#0066cc;">0,00</div>
<div class="t " style="left:69px;top:231px;font-size:12px;line-height:14px;font-weight:bold;">Стоимость без учёта НДС</div>
<div class="t " style="left:665.4000000000001px;width:600px;text-align:right;top:231px;font-size:12px;line-height:14px;font-weight:bold;letter-spacing:0.4px;color:#0066cc;">5 553 669,09</div>
<div class="t " style="left:69px;top:247px;font-size:12px;line-height:14px;font-weight:bold;">НДС</div>
<div class="t " style="left:665.4000000000001px;width:600px;text-align:right;top:247px;font-size:12px;line-height:14px;font-weight:bold;letter-spacing:0.4px;color:#0066cc;">1 110 733,82</div>
<div class="t " style="left:69px;top:263px;font-size:12px;line-height:14px;font-weight:bold;">Стоимость с учётом НДС</div>
<div class="t " style="left:665.4000000000001px;width:600px;text-align:right;top:263px;font-size:12px;line-height:14px;font-weight:bold;letter-spacing:0.4px;color:#0066cc;">6 664 402,91</div>
<div class="r" style="left:1px;top:715px;width:1362px;height:1px;background:#a0a0a0;"></div>
<div class="r" style="left:1px;top:716px;width:1346px;height:341px;background:#fff;"></div>
<div class="r" style="left:1px;top:716px;width:1168px;height:35px;background:#f0f0f0;"></div>
<div class="r" style="left:1px;top:733px;width:1168px;height:1px;background:#a0a0a0;"></div>
<div class="r" style="left:1px;top:751px;width:1168px;height:1px;background:#a0a0a0;"></div>
<div class="r" style="left:1169px;top:716px;width:1px;height:35px;background:#a0a0a0;"></div>
<div class="t " style="left:185px;width:800px;text-align:center;top:719px;font-size:11px;line-height:13px;">Работы и затраты</div>
<div class="r" style="left:249px;top:736px;width:1px;height:15px;background:#a0a0a0;"></div>
<div class="r" style="left:519px;top:736px;width:1px;height:15px;background:#a0a0a0;"></div>
<div class="r" style="left:789px;top:736px;width:1px;height:15px;background:#a0a0a0;"></div>
<div class="r" style="left:899px;top:736px;width:1px;height:15px;background:#a0a0a0;"></div>
<div class="r" style="left:1029px;top:736px;width:1px;height:15px;background:#a0a0a0;"></div>
<div class="t " style="left:3px;top:737px;font-size:11px;line-height:13px;">Шифр</div>
<div class="t " style="left:253px;top:737px;font-size:11px;line-height:13px;">Наименование</div>
<div class="t " style="left:523px;top:737px;font-size:11px;line-height:13px;">Наименование конструктива</div>
<div class="t " style="left:793px;top:737px;font-size:11px;line-height:13px;">Единица измерения</div>
<div class="t " style="left:903px;top:737px;font-size:11px;line-height:13px;">Количество</div>
<div class="t " style="left:1033px;top:737px;font-size:11px;line-height:13px;">Итого</div>
<div class="r" style="left:16px;top:752px;width:1153px;height:305px;background:#f9fff9;"></div>
<div class="r" style="left:10px;top:816px;width:1159px;height:16px;background:#f0f0f0;"></div>
<div class="r" style="left:7px;top:760px;width:1px;height:297px;background:repeating-linear-gradient(#606060 0 1px,transparent 1px 2px)"></div>
<div class="r" style="left:9px;top:760px;width:7px;height:1px;background:repeating-linear-gradient(90deg,#606060 0 1px,transparent 1px 2px)"></div>
<svg class="r" style="left:16px;top:753px;" width="16" height="14" viewBox="0 0 16 14"><rect x="0" y="0" width="16" height="14" fill="#c8c8c8"/><rect x="1" y="1" width="14" height="12" fill="#f0f0f0"/><rect x="1" y="1" width="14" height="6" fill="#d8e8fc"/><rect x="1" y="13" width="15" height="1" fill="#707070"/><rect x="15" y="0" width="1" height="14" fill="#707070"/><path d="M3.5 11.5V5.5q0-1.2 1.6-1.2h0.6q1.6 0 1.6 1.8t-1.6 1.8h-1.6M8.5 11.5V5.5q0-1.2 1.6-1.2h0.6q1.6 0 1.6 1.8t-1.6 1.8h-1.6" stroke="#2a2a2a" stroke-width="1" fill="none"/></svg>
<div class="t " style="left:253px;top:754px;font-size:11px;line-height:13px;">Выполнение инженерных изысканий</div>
<div class="t " style="left:568.4000000000001px;width:600px;text-align:right;top:753px;font-size:12px;line-height:14px;font-weight:bold;letter-spacing:0.4px;color:#0066cc;">0,00</div>
<div class="r" style="left:9px;top:776px;width:7px;height:1px;background:repeating-linear-gradient(90deg,#606060 0 1px,transparent 1px 2px)"></div>
<svg class="r" style="left:16px;top:769px;" width="16" height="14" viewBox="0 0 16 14"><rect x="0" y="0" width="16" height="14" fill="#c8c8c8"/><rect x="1" y="1" width="14" height="12" fill="#f0f0f0"/><rect x="1" y="1" width="14" height="6" fill="#d8e8fc"/><rect x="1" y="13" width="15" height="1" fill="#707070"/><rect x="15" y="0" width="1" height="14" fill="#707070"/><path d="M3.5 11.5V5.5q0-1.2 1.6-1.2h0.6q1.6 0 1.6 1.8t-1.6 1.8h-1.6M8.5 11.5V5.5q0-1.2 1.6-1.2h0.6q1.6 0 1.6 1.8t-1.6 1.8h-1.6" stroke="#2a2a2a" stroke-width="1" fill="none"/></svg>
<div class="t " style="left:253px;top:770px;font-size:11px;line-height:13px;">Дополнительные затраты в зимнее время</div>
<div class="t " style="left:568.4000000000001px;width:600px;text-align:right;top:769px;font-size:12px;line-height:14px;font-weight:bold;letter-spacing:0.4px;color:#0066cc;">0,00</div>
<div class="r" style="left:9px;top:792px;width:7px;height:1px;background:repeating-linear-gradient(90deg,#606060 0 1px,transparent 1px 2px)"></div>
<svg class="r" style="left:16px;top:785px;" width="16" height="14" viewBox="0 0 16 14"><rect x="0" y="0" width="16" height="14" fill="#c8c8c8"/><rect x="1" y="1" width="14" height="12" fill="#f0f0f0"/><rect x="1" y="1" width="14" height="6" fill="#d8e8fc"/><rect x="1" y="13" width="15" height="1" fill="#707070"/><rect x="15" y="0" width="1" height="14" fill="#707070"/><path d="M3.5 11.5V5.5q0-1.2 1.6-1.2h0.6q1.6 0 1.6 1.8t-1.6 1.8h-1.6M8.5 11.5V5.5q0-1.2 1.6-1.2h0.6q1.6 0 1.6 1.8t-1.6 1.8h-1.6" stroke="#2a2a2a" stroke-width="1" fill="none"/></svg>
<div class="t " style="left:253px;top:786px;font-size:11px;line-height:13px;">Дополнительные затраты в зимнее время; 2,1%</div>
<div class="t " style="left:568.4000000000001px;width:600px;text-align:right;top:785px;font-size:12px;line-height:14px;font-weight:bold;letter-spacing:0.4px;color:#0066cc;">60 082,11</div>
<div class="r" style="left:9px;top:808px;width:7px;height:1px;background:repeating-linear-gradient(90deg,#606060 0 1px,transparent 1px 2px)"></div>
<svg class="r" style="left:16px;top:801px;" width="16" height="14" viewBox="0 0 16 14"><rect x="0" y="0" width="16" height="14" fill="#c8c8c8"/><rect x="1" y="1" width="14" height="12" fill="#f0f0f0"/><rect x="1" y="1" width="14" height="6" fill="#d8e8fc"/><rect x="1" y="13" width="15" height="1" fill="#707070"/><rect x="15" y="0" width="1" height="14" fill="#707070"/><path d="M3.5 11.5V5.5q0-1.2 1.6-1.2h0.6q1.6 0 1.6 1.8t-1.6 1.8h-1.6M8.5 11.5V5.5q0-1.2 1.6-1.2h0.6q1.6 0 1.6 1.8t-1.6 1.8h-1.6" stroke="#2a2a2a" stroke-width="1" fill="none"/></svg>
<div class="t " style="left:253px;top:802px;font-size:11px;line-height:13px;">Дополнительные затраты в зимнее время; 2,8%</div>
<div class="t " style="left:568.4000000000001px;width:600px;text-align:right;top:801px;font-size:12px;line-height:14px;font-weight:bold;letter-spacing:0.4px;color:#0066cc;">32 342,12</div>
<div class="r" style="left:9px;top:824px;width:7px;height:1px;background:repeating-linear-gradient(90deg,#606060 0 1px,transparent 1px 2px)"></div>
<svg class="r" style="left:16px;top:817px;" width="16" height="14" viewBox="0 0 16 14"><rect x="0" y="0" width="16" height="14" fill="#c8c8c8"/><rect x="1" y="1" width="14" height="12" fill="#f0f0f0"/><rect x="1" y="1" width="14" height="6" fill="#d8e8fc"/><rect x="1" y="13" width="15" height="1" fill="#707070"/><rect x="15" y="0" width="1" height="14" fill="#707070"/><path d="M3.5 11.5V5.5q0-1.2 1.6-1.2h0.6q1.6 0 1.6 1.8t-1.6 1.8h-1.6M8.5 11.5V5.5q0-1.2 1.6-1.2h0.6q1.6 0 1.6 1.8t-1.6 1.8h-1.6" stroke="#2a2a2a" stroke-width="1" fill="none"/></svg>
<div class="t " style="left:253px;top:818px;font-size:11px;line-height:13px;">Дополнительные затраты в зимнее время; 3,4%</div>
<div class="t " style="left:568.4000000000001px;width:600px;text-align:right;top:817px;font-size:12px;line-height:14px;font-weight:bold;letter-spacing:0.4px;">58 381,79</div>
<div class="r" style="left:9px;top:840px;width:7px;height:1px;background:repeating-linear-gradient(90deg,#606060 0 1px,transparent 1px 2px)"></div>
<svg class="r" style="left:16px;top:833px;" width="16" height="14" viewBox="0 0 16 14"><rect x="0" y="0" width="16" height="14" fill="#c8c8c8"/><rect x="1" y="1" width="14" height="12" fill="#f0f0f0"/><rect x="1" y="1" width="14" height="6" fill="#d8e8fc"/><rect x="1" y="13" width="15" height="1" fill="#707070"/><rect x="15" y="0" width="1" height="14" fill="#707070"/><path d="M3.5 11.5V5.5q0-1.2 1.6-1.2h0.6q1.6 0 1.6 1.8t-1.6 1.8h-1.6M8.5 11.5V5.5q0-1.2 1.6-1.2h0.6q1.6 0 1.6 1.8t-1.6 1.8h-1.6" stroke="#2a2a2a" stroke-width="1" fill="none"/></svg>
<div class="t " style="left:253px;top:834px;font-size:11px;line-height:13px;">Затраты на временные здания и сооружения</div>
<div class="t " style="left:568.4000000000001px;width:600px;text-align:right;top:833px;font-size:12px;line-height:14px;font-weight:bold;letter-spacing:0.4px;color:#0066cc;">0,00</div>
<div class="r" style="left:9px;top:862px;width:7px;height:1px;background:repeating-linear-gradient(90deg,#606060 0 1px,transparent 1px 2px)"></div>
<svg class="r" style="left:16px;top:855px;" width="16" height="14" viewBox="0 0 16 14"><rect x="0" y="0" width="16" height="14" fill="#c8c8c8"/><rect x="1" y="1" width="14" height="12" fill="#f0f0f0"/><rect x="1" y="1" width="14" height="6" fill="#d8e8fc"/><rect x="1" y="13" width="15" height="1" fill="#707070"/><rect x="15" y="0" width="1" height="14" fill="#707070"/><path d="M3.5 11.5V5.5q0-1.2 1.6-1.2h0.6q1.6 0 1.6 1.8t-1.6 1.8h-1.6M8.5 11.5V5.5q0-1.2 1.6-1.2h0.6q1.6 0 1.6 1.8t-1.6 1.8h-1.6" stroke="#2a2a2a" stroke-width="1" fill="none"/></svg>
<div class="t " style="left:253px;top:850px;font-size:11px;line-height:13px;">Затраты на временные здания и сооружения; 1,2%</div>
<div class="t " style="left:568.4000000000001px;width:600px;text-align:right;top:849px;font-size:12px;line-height:14px;font-weight:bold;letter-spacing:0.4px;color:#0066cc;">13 696,55</div>
<div class="r" style="left:9px;top:891px;width:7px;height:1px;background:repeating-linear-gradient(90deg,#606060 0 1px,transparent 1px 2px)"></div>
<svg class="r" style="left:16px;top:884px;" width="16" height="14" viewBox="0 0 16 14"><rect x="0" y="0" width="16" height="14" fill="#c8c8c8"/><rect x="1" y="1" width="14" height="12" fill="#f0f0f0"/><rect x="1" y="1" width="14" height="6" fill="#d8e8fc"/><rect x="1" y="13" width="15" height="1" fill="#707070"/><rect x="15" y="0" width="1" height="14" fill="#707070"/><path d="M3.5 11.5V5.5q0-1.2 1.6-1.2h0.6q1.6 0 1.6 1.8t-1.6 1.8h-1.6M8.5 11.5V5.5q0-1.2 1.6-1.2h0.6q1.6 0 1.6 1.8t-1.6 1.8h-1.6" stroke="#2a2a2a" stroke-width="1" fill="none"/></svg>
<div class="t " style="left:253px;top:879px;font-size:11px;line-height:13px;">Затраты на временные здания и сооружения; 1,6%</div>
<div class="t " style="left:568.4000000000001px;width:600px;text-align:right;top:878px;font-size:12px;line-height:14px;font-weight:bold;letter-spacing:0.4px;color:#0066cc;">27 041,13</div>
<div class="r" style="left:9px;top:920px;width:7px;height:1px;background:repeating-linear-gradient(90deg,#606060 0 1px,transparent 1px 2px)"></div>
<svg class="r" style="left:16px;top:913px;" width="16" height="14" viewBox="0 0 16 14"><rect x="0" y="0" width="16" height="14" fill="#c8c8c8"/><rect x="1" y="1" width="14" height="12" fill="#f0f0f0"/><rect x="1" y="1" width="14" height="6" fill="#d8e8fc"/><rect x="1" y="13" width="15" height="1" fill="#707070"/><rect x="15" y="0" width="1" height="14" fill="#707070"/><path d="M3.5 11.5V5.5q0-1.2 1.6-1.2h0.6q1.6 0 1.6 1.8t-1.6 1.8h-1.6M8.5 11.5V5.5q0-1.2 1.6-1.2h0.6q1.6 0 1.6 1.8t-1.6 1.8h-1.6" stroke="#2a2a2a" stroke-width="1" fill="none"/></svg>
<div class="t " style="left:253px;top:908px;font-size:11px;line-height:13px;">Затраты на временные здания и сооружения; 5,1%</div>
<div class="t " style="left:568.4000000000001px;width:600px;text-align:right;top:907px;font-size:12px;line-height:14px;font-weight:bold;letter-spacing:0.4px;color:#0066cc;">138 833,20</div>
<div class="r" style="left:9px;top:949px;width:7px;height:1px;background:repeating-linear-gradient(90deg,#606060 0 1px,transparent 1px 2px)"></div>
<svg class="r" style="left:16px;top:942px;" width="16" height="14" viewBox="0 0 16 14"><rect x="0" y="0" width="16" height="14" fill="#c8c8c8"/><rect x="1" y="1" width="14" height="12" fill="#f0f0f0"/><rect x="1" y="1" width="14" height="6" fill="#d8e8fc"/><rect x="1" y="13" width="15" height="1" fill="#707070"/><rect x="15" y="0" width="1" height="14" fill="#707070"/><path d="M3.5 11.5V5.5q0-1.2 1.6-1.2h0.6q1.6 0 1.6 1.8t-1.6 1.8h-1.6M8.5 11.5V5.5q0-1.2 1.6-1.2h0.6q1.6 0 1.6 1.8t-1.6 1.8h-1.6" stroke="#2a2a2a" stroke-width="1" fill="none"/></svg>
<div class="t " style="left:253px;top:937px;font-size:11px;line-height:13px;">Затраты на осуществление строительного</div>
<div class="t " style="left:253px;top:950px;font-size:11px;line-height:13px;">контроля</div>
<div class="t " style="left:568.4000000000001px;width:600px;text-align:right;top:936px;font-size:12px;line-height:14px;font-weight:bold;letter-spacing:0.4px;color:#0066cc;">0,00</div>
<div class="r" style="left:9px;top:978px;width:7px;height:1px;background:repeating-linear-gradient(90deg,#606060 0 1px,transparent 1px 2px)"></div>
<svg class="r" style="left:16px;top:971px;" width="16" height="14" viewBox="0 0 16 14"><rect x="0" y="0" width="16" height="14" fill="#c8c8c8"/><rect x="1" y="1" width="14" height="12" fill="#f0f0f0"/><rect x="1" y="1" width="14" height="6" fill="#d8e8fc"/><rect x="1" y="13" width="15" height="1" fill="#707070"/><rect x="15" y="0" width="1" height="14" fill="#707070"/><path d="M3.5 11.5V5.5q0-1.2 1.6-1.2h0.6q1.6 0 1.6 1.8t-1.6 1.8h-1.6M8.5 11.5V5.5q0-1.2 1.6-1.2h0.6q1.6 0 1.6 1.8t-1.6 1.8h-1.6" stroke="#2a2a2a" stroke-width="1" fill="none"/></svg>
<div class="t " style="left:253px;top:966px;font-size:11px;line-height:13px;">Затраты, связанные с выполнением функций</div>
<div class="t " style="left:253px;top:979px;font-size:11px;line-height:13px;">технического заказчика</div>
<div class="t " style="left:568.4000000000001px;width:600px;text-align:right;top:965px;font-size:12px;line-height:14px;font-weight:bold;letter-spacing:0.4px;color:#0066cc;">0,00</div>
<div class="r" style="left:9px;top:1001px;width:7px;height:1px;background:repeating-linear-gradient(90deg,#606060 0 1px,transparent 1px 2px)"></div>
<svg class="r" style="left:16px;top:994px;" width="16" height="14" viewBox="0 0 16 14"><rect x="0" y="0" width="16" height="14" fill="#c8c8c8"/><rect x="1" y="1" width="14" height="12" fill="#f0f0f0"/><rect x="1" y="1" width="14" height="6" fill="#d8e8fc"/><rect x="1" y="13" width="15" height="1" fill="#707070"/><rect x="15" y="0" width="1" height="14" fill="#707070"/><path d="M3.5 11.5V5.5q0-1.2 1.6-1.2h0.6q1.6 0 1.6 1.8t-1.6 1.8h-1.6M8.5 11.5V5.5q0-1.2 1.6-1.2h0.6q1.6 0 1.6 1.8t-1.6 1.8h-1.6" stroke="#2a2a2a" stroke-width="1" fill="none"/></svg>
<div class="t " style="left:253px;top:995px;font-size:11px;line-height:13px;">Иные прочие работы и затраты</div>
<div class="t " style="left:568.4000000000001px;width:600px;text-align:right;top:994px;font-size:12px;line-height:14px;font-weight:bold;letter-spacing:0.4px;color:#0066cc;">0,00</div>
<div class="r" style="left:9px;top:1017px;width:7px;height:1px;background:repeating-linear-gradient(90deg,#606060 0 1px,transparent 1px 2px)"></div>
<svg class="r" style="left:16px;top:1010px;" width="16" height="14" viewBox="0 0 16 14"><rect x="0" y="0" width="16" height="14" fill="#c8c8c8"/><rect x="1" y="1" width="14" height="12" fill="#f0f0f0"/><rect x="1" y="1" width="14" height="6" fill="#d8e8fc"/><rect x="1" y="13" width="15" height="1" fill="#707070"/><rect x="15" y="0" width="1" height="14" fill="#707070"/><path d="M3.5 11.5V5.5q0-1.2 1.6-1.2h0.6q1.6 0 1.6 1.8t-1.6 1.8h-1.6M8.5 11.5V5.5q0-1.2 1.6-1.2h0.6q1.6 0 1.6 1.8t-1.6 1.8h-1.6" stroke="#2a2a2a" stroke-width="1" fill="none"/></svg>
<div class="t " style="left:253px;top:1011px;font-size:11px;line-height:13px;">Командирование рабочих</div>
<div class="t " style="left:568.4000000000001px;width:600px;text-align:right;top:1010px;font-size:12px;line-height:14px;font-weight:bold;letter-spacing:0.4px;color:#0066cc;">0,00</div>
<div class="r" style="left:9px;top:1033px;width:7px;height:1px;background:repeating-linear-gradient(90deg,#606060 0 1px,transparent 1px 2px)"></div>
<svg class="r" style="left:16px;top:1026px;" width="16" height="14" viewBox="0 0 16 14"><rect x="0" y="0" width="16" height="14" fill="#c8c8c8"/><rect x="1" y="1" width="14" height="12" fill="#f0f0f0"/><rect x="1" y="1" width="14" height="6" fill="#d8e8fc"/><rect x="1" y="13" width="15" height="1" fill="#707070"/><rect x="15" y="0" width="1" height="14" fill="#707070"/><path d="M3.5 11.5V5.5q0-1.2 1.6-1.2h0.6q1.6 0 1.6 1.8t-1.6 1.8h-1.6M8.5 11.5V5.5q0-1.2 1.6-1.2h0.6q1.6 0 1.6 1.8t-1.6 1.8h-1.6" stroke="#2a2a2a" stroke-width="1" fill="none"/></svg>
<div class="t " style="left:253px;top:1027px;font-size:11px;line-height:13px;">Осуществление работ вахтовым методом</div>
<div class="t " style="left:568.4000000000001px;width:600px;text-align:right;top:1026px;font-size:12px;line-height:14px;font-weight:bold;letter-spacing:0.4px;color:#0066cc;">0,00</div>
<div class="r" style="left:9px;top:1055px;width:7px;height:1px;background:repeating-linear-gradient(90deg,#606060 0 1px,transparent 1px 2px)"></div>
<svg class="r" style="left:16px;top:1048px;" width="16" height="14" viewBox="0 0 16 14"><rect x="0" y="0" width="16" height="14" fill="#c8c8c8"/><rect x="1" y="1" width="14" height="12" fill="#f0f0f0"/><rect x="1" y="1" width="14" height="6" fill="#d8e8fc"/><rect x="1" y="13" width="15" height="1" fill="#707070"/><rect x="15" y="0" width="1" height="14" fill="#707070"/><path d="M3.5 11.5V5.5q0-1.2 1.6-1.2h0.6q1.6 0 1.6 1.8t-1.6 1.8h-1.6M8.5 11.5V5.5q0-1.2 1.6-1.2h0.6q1.6 0 1.6 1.8t-1.6 1.8h-1.6" stroke="#2a2a2a" stroke-width="1" fill="none"/></svg>
<div class="t " style="left:253px;top:1043px;font-size:11px;line-height:13px;">Перебазирование строительно-монтажных</div>
<div class="t " style="left:253px;top:1056px;font-size:11px;line-height:13px;">работ</div>
<div class="t " style="left:568.4000000000001px;width:600px;text-align:right;top:1042px;font-size:12px;line-height:14px;font-weight:bold;letter-spacing:0.4px;color:#0066cc;">0,00</div>
<div class="r" style="left:250px;top:752px;width:270px;height:16px;border:1px solid #000;box-sizing:border-box;"></div>
<div class="r" style="left:1347px;top:716px;width:16px;height:341px;background:#f0f0f0;"></div>
<div class="r" style="left:1363px;top:716px;width:1px;height:341px;background:#fff;"></div>
<div class="r" style="left:1347px;top:733px;width:15px;height:252px;background:#cdcdcd;"></div>
<svg class="r" style="left:1347px;top:718px;" width="15" height="12" viewBox="0 0 15 12"><path d="M4.2 9.5l3.3-3.8 3.3 3.8" stroke="#505050" stroke-width="2.2" fill="none"/></svg>
<svg class="r" style="left:1347px;top:1042px;" width="15" height="12" viewBox="0 0 15 12"><path d="M4.2 3.5l3.3 3.8 3.3-3.8" stroke="#505050" stroke-width="2.2" fill="none"/></svg>
<div class="r" style="left:1px;top:1057px;width:1363px;height:35px;background:#f0f0f0;"></div>
<div class="t " style="left:1380px;top:116px;font-size:12px;line-height:14px;font-weight:bold;">Параметры</div>
<div class="t " style="left:1380px;top:149px;font-size:11px;line-height:13px;">Дата утверждения сметной документации:</div>
<div class="r" style="left:1380px;top:168px;width:170px;height:18px;background:#f4f7fc;"></div>
<div class="r" style="left:1380px;top:168px;width:170px;height:1px;background:#a0a0a0;"></div>
<div class="r" style="left:1380px;top:168px;width:1px;height:18px;background:#a0a0a0;"></div>
<div class="r" style="left:1380px;top:185px;width:170px;height:1px;background:#fff;"></div>
<div class="r" style="left:1549px;top:168px;width:1px;height:18px;background:#fff;"></div>
<div class="r" style="left:1533px;top:170px;width:15px;height:15px;background:#f0f0f0;"></div>
<div class="r" style="left:1533px;top:170px;width:15px;height:1px;background:#fff;"></div>
<div class="r" style="left:1533px;top:170px;width:1px;height:15px;background:#fff;"></div>
<div class="r" style="left:1533px;top:184px;width:15px;height:1px;background:#a0a0a0;"></div>
<div class="r" style="left:1547px;top:170px;width:1px;height:15px;background:#a0a0a0;"></div>
<svg class="r" style="left:1536px;top:174px;" width="9" height="6" viewBox="0 0 9 6"><path d="M1 1h7l-3.5 4z" fill="#a0a0a0"/></svg>
<div class="t " style="left:1383px;top:172px;font-size:11px;line-height:13px;color:#6d6d6d;">Март 2025</div>
<div class="t " style="left:1380px;top:205px;font-size:11px;line-height:13px;">Регион:</div>
<div class="r" style="left:1380px;top:224px;width:361px;height:18px;background:#f4f7fc;"></div>
<div class="r" style="left:1380px;top:224px;width:361px;height:1px;background:#a0a0a0;"></div>
<div class="r" style="left:1380px;top:224px;width:1px;height:18px;background:#a0a0a0;"></div>
<div class="r" style="left:1380px;top:241px;width:361px;height:1px;background:#fff;"></div>
<div class="r" style="left:1740px;top:224px;width:1px;height:18px;background:#fff;"></div>
<div class="r" style="left:1724px;top:226px;width:15px;height:15px;background:#f0f0f0;"></div>
<div class="r" style="left:1724px;top:226px;width:15px;height:1px;background:#fff;"></div>
<div class="r" style="left:1724px;top:226px;width:1px;height:15px;background:#fff;"></div>
<div class="r" style="left:1724px;top:240px;width:15px;height:1px;background:#a0a0a0;"></div>
<div class="r" style="left:1738px;top:226px;width:1px;height:15px;background:#a0a0a0;"></div>
<svg class="r" style="left:1727px;top:230px;" width="9" height="6" viewBox="0 0 9 6"><path d="M1 1h7l-3.5 4z" fill="#a0a0a0"/></svg>
<div class="t " style="left:1383px;top:228px;font-size:11px;line-height:13px;color:#6d6d6d;">Российская Федерация</div>
<div class="r" style="left:1380px;top:259px;width:361px;height:1px;background:#a0a0a0;"></div>
<div class="r" style="left:1380px;top:260px;width:361px;height:1px;background:#fff;"></div>
<div class="t " style="left:1380px;top:269px;font-size:11px;line-height:13px;">Дата формирования контракта:</div>
<div class="t " style="left:1572px;top:269px;font-size:11px;line-height:13px;">Индекс фактической инфляции:</div>
<div class="r" style="left:1380px;top:288px;width:170px;height:18px;background:#f4f7fc;"></div>
<div class="r" style="left:1380px;top:288px;width:170px;height:1px;background:#a0a0a0;"></div>
<div class="r" style="left:1380px;top:288px;width:1px;height:18px;background:#a0a0a0;"></div>
<div class="r" style="left:1380px;top:305px;width:170px;height:1px;background:#fff;"></div>
<div class="r" style="left:1549px;top:288px;width:1px;height:18px;background:#fff;"></div>
<div class="r" style="left:1533px;top:290px;width:15px;height:15px;background:#f0f0f0;"></div>
<div class="r" style="left:1533px;top:290px;width:15px;height:1px;background:#fff;"></div>
<div class="r" style="left:1533px;top:290px;width:1px;height:15px;background:#fff;"></div>
<div class="r" style="left:1533px;top:304px;width:15px;height:1px;background:#a0a0a0;"></div>
<div class="r" style="left:1547px;top:290px;width:1px;height:15px;background:#a0a0a0;"></div>
<svg class="r" style="left:1536px;top:294px;" width="9" height="6" viewBox="0 0 9 6"><path d="M1 1h7l-3.5 4z" fill="#a0a0a0"/></svg>
<div class="t " style="left:1383px;top:292px;font-size:11px;line-height:13px;color:#6d6d6d;">Апрель 2025</div>
<div class="r" style="left:1572px;top:288px;width:169px;height:18px;background:#f4f7fc;"></div>
<div class="r" style="left:1572px;top:288px;width:169px;height:1px;background:#a0a0a0;"></div>
<div class="r" style="left:1572px;top:288px;width:1px;height:18px;background:#a0a0a0;"></div>
<div class="r" style="left:1572px;top:305px;width:169px;height:1px;background:#fff;"></div>
<div class="r" style="left:1740px;top:288px;width:1px;height:18px;background:#fff;"></div>
<div class="t " style="left:1137px;width:600px;text-align:right;top:292px;font-size:11px;line-height:13px;color:#6d6d6d;">1,0047</div>
<div class="t " style="left:1380px;top:325px;font-size:11px;line-height:13px;">Начало выполнения работ:</div>
<div class="t " style="left:1572px;top:325px;font-size:11px;line-height:13px;">Индекс прогнозной инфляции:</div>
<div class="r" style="left:1380px;top:352px;width:170px;height:18px;background:#f4f7fc;"></div>
<div class="r" style="left:1380px;top:352px;width:170px;height:1px;background:#a0a0a0;"></div>
<div class="r" style="left:1380px;top:352px;width:1px;height:18px;background:#a0a0a0;"></div>
<div class="r" style="left:1380px;top:369px;width:170px;height:1px;background:#fff;"></div>
<div class="r" style="left:1549px;top:352px;width:1px;height:18px;background:#fff;"></div>
<div class="r" style="left:1533px;top:354px;width:15px;height:15px;background:#f0f0f0;"></div>
<div class="r" style="left:1533px;top:354px;width:15px;height:1px;background:#fff;"></div>
<div class="r" style="left:1533px;top:354px;width:1px;height:15px;background:#fff;"></div>
<div class="r" style="left:1533px;top:368px;width:15px;height:1px;background:#a0a0a0;"></div>
<div class="r" style="left:1547px;top:354px;width:1px;height:15px;background:#a0a0a0;"></div>
<svg class="r" style="left:1536px;top:358px;" width="9" height="6" viewBox="0 0 9 6"><path d="M1 1h7l-3.5 4z" fill="#a0a0a0"/></svg>
<div class="t " style="left:1383px;top:356px;font-size:11px;line-height:13px;color:#6d6d6d;">Июнь 2025</div>
<div class="r" style="left:1572px;top:352px;width:169px;height:18px;background:#f4f7fc;"></div>
<div class="r" style="left:1572px;top:352px;width:169px;height:1px;background:#a0a0a0;"></div>
<div class="r" style="left:1572px;top:352px;width:1px;height:18px;background:#a0a0a0;"></div>
<div class="r" style="left:1572px;top:369px;width:169px;height:1px;background:#fff;"></div>
<div class="r" style="left:1740px;top:352px;width:1px;height:18px;background:#fff;"></div>
<div class="t " style="left:1137px;width:600px;text-align:right;top:356px;font-size:11px;line-height:13px;color:#6d6d6d;">1,0593</div>
<div class="t " style="left:1380px;top:389px;font-size:11px;line-height:13px;">Окончание выполнения работ:</div>
<div class="r" style="left:1380px;top:416px;width:170px;height:18px;background:#f4f7fc;"></div>
<div class="r" style="left:1380px;top:416px;width:170px;height:1px;background:#a0a0a0;"></div>
<div class="r" style="left:1380px;top:416px;width:1px;height:18px;background:#a0a0a0;"></div>
<div class="r" style="left:1380px;top:433px;width:170px;height:1px;background:#fff;"></div>
<div class="r" style="left:1549px;top:416px;width:1px;height:18px;background:#fff;"></div>
<div class="r" style="left:1533px;top:418px;width:15px;height:15px;background:#f0f0f0;"></div>
<div class="r" style="left:1533px;top:418px;width:15px;height:1px;background:#fff;"></div>
<div class="r" style="left:1533px;top:418px;width:1px;height:15px;background:#fff;"></div>
<div class="r" style="left:1533px;top:432px;width:15px;height:1px;background:#a0a0a0;"></div>
<div class="r" style="left:1547px;top:418px;width:1px;height:15px;background:#a0a0a0;"></div>
<svg class="r" style="left:1536px;top:422px;" width="9" height="6" viewBox="0 0 9 6"><path d="M1 1h7l-3.5 4z" fill="#a0a0a0"/></svg>
<div class="t " style="left:1383px;top:420px;font-size:11px;line-height:13px;color:#6d6d6d;">Сентябрь 2026</div>
<div class="r" style="left:1380px;top:443px;width:361px;height:1px;background:#a0a0a0;"></div>
<div class="r" style="left:1380px;top:444px;width:361px;height:1px;background:#fff;"></div>
<div class="t " style="left:1380px;top:460px;font-size:12px;line-height:14px;font-weight:bold;">Начисления</div>
<div class="t " style="left:1380px;top:493px;font-size:11px;line-height:13px;">Резерв, %:</div>
<div class="t " style="left:1572px;top:493px;font-size:11px;line-height:13px;">НДС, %:</div>
<div class="r" style="left:1380px;top:520px;width:170px;height:18px;background:#f4f7fc;"></div>
<div class="r" style="left:1380px;top:520px;width:170px;height:1px;background:#a0a0a0;"></div>
<div class="r" style="left:1380px;top:520px;width:1px;height:18px;background:#a0a0a0;"></div>
<div class="r" style="left:1380px;top:537px;width:170px;height:1px;background:#fff;"></div>
<div class="r" style="left:1549px;top:520px;width:1px;height:18px;background:#fff;"></div>
<div class="t " style="left:946px;width:600px;text-align:right;top:524px;font-size:11px;line-height:13px;color:#6d6d6d;">0</div>
<div class="r" style="left:1572px;top:520px;width:169px;height:18px;background:#f4f7fc;"></div>
<div class="r" style="left:1572px;top:520px;width:169px;height:1px;background:#a0a0a0;"></div>
<div class="r" style="left:1572px;top:520px;width:1px;height:18px;background:#a0a0a0;"></div>
<div class="r" style="left:1572px;top:537px;width:169px;height:1px;background:#fff;"></div>
<div class="r" style="left:1740px;top:520px;width:1px;height:18px;background:#fff;"></div>
<div class="t " style="left:1137px;width:600px;text-align:right;top:524px;font-size:11px;line-height:13px;color:#6d6d6d;">20</div>
<div class="r" style="left:1555px;top:1061px;width:96px;height:25px;background:#f0f0f0;"></div>
<div class="r" style="left:1555px;top:1061px;width:96px;height:1px;background:#fff;"></div>
<div class="r" style="left:1555px;top:1061px;width:1px;height:25px;background:#fff;"></div>
<div class="r" style="left:1555px;top:1085px;width:96px;height:1px;background:#696969;"></div>
<div class="r" style="left:1650px;top:1061px;width:1px;height:25px;background:#696969;"></div>
<div class="r" style="left:1556px;top:1084px;width:94px;height:1px;background:#a0a0a0;"></div>
<div class="r" style="left:1649px;top:1062px;width:1px;height:23px;background:#a0a0a0;"></div>
<div class="t " style="left:1203px;width:800px;text-align:center;top:1067px;font-size:11px;line-height:13px;">Применить</div>
<div class="r" style="left:1652px;top:1061px;width:96px;height:25px;background:#f0f0f0;"></div>
<div class="r" style="left:1652px;top:1061px;width:96px;height:1px;background:#fff;"></div>
<div class="r" style="left:1652px;top:1061px;width:1px;height:25px;background:#fff;"></div>
<div class="r" style="left:1652px;top:1085px;width:96px;height:1px;background:#696969;"></div>
<div class="r" style="left:1747px;top:1061px;width:1px;height:25px;background:#696969;"></div>
<div class="r" style="left:1653px;top:1084px;width:94px;height:1px;background:#a0a0a0;"></div>
<div class="r" style="left:1746px;top:1062px;width:1px;height:23px;background:#a0a0a0;"></div>
<div class="t " style="left:1300px;width:800px;text-align:center;top:1067px;font-size:11px;line-height:13px;">Отмена</div>
<div class="r" style="left:1px;top:1092px;width:1749px;height:1px;background:#fff;"></div>
<div class="r" style="left:2px;top:1094px;width:84px;height:1px;background:#a0a0a0;"></div>
<div class="r" style="left:2px;top:1094px;width:1px;height:25px;background:#a0a0a0;"></div>
<div class="r" style="left:2px;top:1119px;width:84px;height:1px;background:#fff;"></div>
<div class="r" style="left:86px;top:1094px;width:1px;height:26px;background:#fff;"></div>
<div class="r" style="left:91px;top:1094px;width:295px;height:1px;background:#a0a0a0;"></div>
<div class="r" style="left:91px;top:1094px;width:1px;height:25px;background:#a0a0a0;"></div>
<div class="r" style="left:91px;top:1119px;width:295px;height:1px;background:#fff;"></div>
<div class="r" style="left:386px;top:1094px;width:1px;height:26px;background:#fff;"></div>
<div class="r" style="left:391px;top:1094px;width:1288px;height:1px;background:#a0a0a0;"></div>
<div class="r" style="left:391px;top:1094px;width:1px;height:25px;background:#a0a0a0;"></div>
<div class="r" style="left:391px;top:1119px;width:1288px;height:1px;background:#fff;"></div>
<div class="r" style="left:1679px;top:1094px;width:1px;height:26px;background:#fff;"></div>
<div class="r" style="left:1684px;top:1094px;width:29px;height:1px;background:#a0a0a0;"></div>
<div class="r" style="left:1684px;top:1094px;width:1px;height:25px;background:#a0a0a0;"></div>
<div class="r" style="left:1684px;top:1119px;width:29px;height:1px;background:#fff;"></div>
<div class="r" style="left:1713px;top:1094px;width:1px;height:26px;background:#fff;"></div>
<div class="r" style="left:1718px;top:1094px;width:29px;height:1px;background:#a0a0a0;"></div>
<div class="r" style="left:1718px;top:1094px;width:1px;height:25px;background:#a0a0a0;"></div>
<div class="r" style="left:1718px;top:1119px;width:29px;height:1px;background:#fff;"></div>
<div class="r" style="left:1747px;top:1094px;width:1px;height:26px;background:#fff;"></div>
<div class="r" style="left:88px;top:1092px;width:1px;height:29px;background:#a0a0a0;"></div>
<div class="r" style="left:388px;top:1092px;width:1px;height:29px;background:#a0a0a0;"></div>
<div class="r" style="left:1681px;top:1092px;width:1px;height:29px;background:#a0a0a0;"></div>
<div class="r" style="left:1715px;top:1092px;width:1px;height:29px;background:#a0a0a0;"></div>
<div class="r" style="left:1749px;top:1092px;width:1px;height:29px;background:#a0a0a0;"></div>
<div class="r" style="left:1px;top:1121px;width:1750px;height:1px;background:#a0a0a0;"></div>
<svg class="r" style="left:1689px;top:1097px;" width="20" height="20" viewBox="0 0 20 20"><circle cx="10" cy="10" r="8" fill="#9a9a9a"/><rect x="9.2" y="5" width="1.9" height="2" fill="#fff"/><rect x="9.2" y="8" width="1.9" height="6.5" fill="#fff"/><path d="M2.5 2.5l15 15" stroke="#ff0000" stroke-width="1.9" stroke-linecap="round"/></svg>
<div class="t " style="left:1333px;width:800px;text-align:center;top:1101px;font-size:11px;line-height:13px;">RU</div>
<div class="r" style="left:566px;top:348px;width:585px;height:325px;background:#fff;border:1px solid #8c8c8c;box-sizing:border-box;"></div>
<div class="t " style="left:596px;top:357px;font-size:12px;line-height:14px;color:#1a1a1a;">Привязка к конструктиву</div>
<svg class="r" style="left:1030px;top:356px;" width="12" height="14" viewBox="0 0 12 14"><path d="M1 7.5h10" stroke="#111" stroke-width="1"/></svg>
<svg class="r" style="left:1075px;top:357px;" width="12" height="12" viewBox="0 0 12 12"><rect x="1.5" y="1.5" width="9" height="9" fill="none" stroke="#111" stroke-width="1"/></svg>
<svg class="r" style="left:1121px;top:357px;" width="12" height="12" viewBox="0 0 12 12"><path d="M1 1l10 10M11 1L1 11" stroke="#111" stroke-width="1"/></svg>
<div class="r" style="left:567px;top:379px;width:582px;height:1px;background:#a0a0a0;"></div>
<div class="r" style="left:567px;top:380px;width:573px;height:52px;background:#f0f0f0;"></div>
<div class="r" style="left:740px;top:416px;width:199px;height:16px;background:#fff;"></div>
<div class="r" style="left:567px;top:432px;width:573px;height:1px;background:#a0a0a0;"></div>
<div class="r" style="left:740px;top:397px;width:400px;height:1px;background:#a0a0a0;"></div>
<div class="r" style="left:567px;top:415px;width:573px;height:1px;background:#a0a0a0;"></div>
<div class="r" style="left:1139px;top:380px;width:1px;height:53px;background:#a0a0a0;"></div>
<div class="r" style="left:739px;top:380px;width:1px;height:52px;background:#a0a0a0;"></div>
<div class="r" style="left:939px;top:380px;width:1px;height:52px;background:#a0a0a0;"></div>
<div class="r" style="left:839px;top:398px;width:1px;height:34px;background:#a0a0a0;"></div>
<div class="r" style="left:1039px;top:398px;width:1px;height:34px;background:#a0a0a0;"></div>
<div class="t " style="left:253px;width:800px;text-align:center;top:391px;font-size:12px;line-height:14px;font-weight:bold;">Наименование работ и з...</div>
<div class="t " style="left:439px;width:800px;text-align:center;top:383px;font-size:12px;line-height:14px;font-weight:bold;">Привязать</div>
<div class="t " style="left:639px;width:800px;text-align:center;top:383px;font-size:12px;line-height:14px;font-weight:bold;">Остаток</div>
<div class="t " style="left:743px;top:401px;font-size:11px;line-height:13px;">%</div>
<div class="t " style="left:843px;top:401px;font-size:11px;line-height:13px;">Руб.</div>
<div class="t " style="left:943px;top:401px;font-size:11px;line-height:13px;">%</div>
<div class="t " style="left:1043px;top:401px;font-size:11px;line-height:13px;">Руб.</div>
<div class="t " style="left:571px;top:417px;font-size:12px;line-height:14px;font-weight:bold;">Дополнительные затраты в</div>
<div class="t " style="left:742px;top:418px;font-size:11px;line-height:13px;">100,00</div>
<div class="t " style="left:842px;top:418px;font-size:11px;line-height:13px;">58 381,79</div>
<div class="t " style="left:942px;top:418px;font-size:11px;line-height:13px;">100,00</div>
<div class="t " style="left:1042px;top:418px;font-size:11px;line-height:13px;">58 381,79</div>
<div class="r" style="left:567px;top:632px;width:583px;height:40px;background:#f0f0f0;"></div>
<div class="r" style="left:567px;top:631px;width:583px;height:1px;background:#a0a0a0;"></div>
<div class="r" style="left:973px;top:639px;width:81px;height:25px;background:#f0f0f0;"></div>
<div class="r" style="left:973px;top:639px;width:81px;height:1px;background:#fff;"></div>
<div class="r" style="left:973px;top:639px;width:1px;height:25px;background:#fff;"></div>
<div class="r" style="left:973px;top:663px;width:81px;height:1px;background:#696969;"></div>
<div class="r" style="left:1053px;top:639px;width:1px;height:25px;background:#696969;"></div>
<div class="r" style="left:974px;top:662px;width:79px;height:1px;background:#a0a0a0;"></div>
<div class="r" style="left:1052px;top:640px;width:1px;height:23px;background:#a0a0a0;"></div>
<div class="r" style="left:973px;top:639px;width:81px;height:25px;border:1px solid #000;box-sizing:border-box;"></div>
<div class="r" style="left:974px;top:640px;width:79px;height:1px;background:#fff;"></div>
<div class="r" style="left:974px;top:640px;width:1px;height:23px;background:#fff;"></div>
<div class="r" style="left:974px;top:662px;width:79px;height:1px;background:#696969;"></div>
<div class="r" style="left:1052px;top:640px;width:1px;height:23px;background:#696969;"></div>
<div class="r" style="left:977px;top:643px;width:73px;height:17px;border:1px dotted #000;box-sizing:border-box;"></div>
<div class="t " style="left:613px;width:800px;text-align:center;top:645px;font-size:11px;line-height:13px;">Применить</div>
<div class="r" style="left:1061px;top:639px;width:81px;height:25px;background:#f0f0f0;"></div>
<div class="r" style="left:1061px;top:639px;width:81px;height:1px;background:#fff;"></div>
<div class="r" style="left:1061px;top:639px;width:1px;height:25px;background:#fff;"></div>
<div class="r" style="left:1061px;top:663px;width:81px;height:1px;background:#696969;"></div>
<div class="r" style="left:1141px;top:639px;width:1px;height:25px;background:#696969;"></div>
<div class="r" style="left:1062px;top:662px;width:79px;height:1px;background:#a0a0a0;"></div>
<div class="r" style="left:1140px;top:640px;width:1px;height:23px;background:#a0a0a0;"></div>
<div class="t " style="left:701px;width:800px;text-align:center;top:645px;font-size:11px;line-height:13px;">Отмена</div>
<svg class="r" style="left:0;top:0" width="1753" height="1125" viewBox="0 0 1753 1125">
<rect x="8.5" y="816.5" width="1170.5" height="15.5" fill="none" stroke="#ff0000" stroke-width="3"/>
<line x1="206.5" y1="816" x2="445" y2="233" stroke="#ff0000" stroke-width="3.4"/>
<polygon points="453.6,212.3 437.9,231.2 452,236.8" fill="#ff0000"/>
<line x1="469" y1="214.5" x2="822" y2="338" stroke="#ff0000" stroke-width="3.4"/>
<polygon points="843.4,345.6 824.5,330.8 819,345.6" fill="#ff0000"/>
</svg>
<div class="r" style="left:0px;top:0px;width:1753px;height:1px;background:#737373;"></div>
<div class="r" style="left:1px;top:1px;width:1749px;height:1px;background:#fff;"></div>
<div class="r" style="left:0px;top:0px;width:1px;height:1125px;background:#737373;"></div>
<div class="r" style="left:1px;top:1px;width:1px;height:99px;background:#fff;"></div>
<div class="r" style="left:1751px;top:0px;width:2px;height:1125px;background:#7a7a7a;"></div>
<div class="r" style="left:1750px;top:1px;width:1px;height:1121px;background:#fff;"></div>
<div class="r" style="left:0px;top:1122px;width:1753px;height:3px;background:#7a7a7a;"></div>
</body></html>
